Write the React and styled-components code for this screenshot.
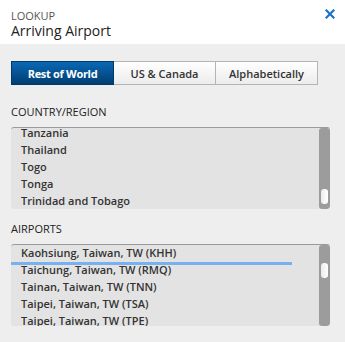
import React from "react";
import styled, { createGlobalStyle } from "styled-components";

const GlobalStyle = createGlobalStyle`
  html, body {
    margin: 0;
    padding: 0;
    background: #eeeeee;
  }
  body {
    font-family: "Open Sans", "Liberation Sans", sans-serif;
  }
`;

const Panel = styled.div`
  width: 345px;
  height: 342px;
  display: flex;
  flex-direction: column;
  background: #eeeeee;
  overflow: hidden;
`;

const Header = styled.div`
  height: 44px;
  background: #ffffff;
  display: flex;
  justify-content: space-between;
  align-items: flex-start;
  padding: 0 10px 0 11px;
  box-sizing: border-box;
`;

const Titles = styled.div`
  display: flex;
  flex-direction: column;
  padding-top: 9px;
`;

const Kicker = styled.div`
  font-size: 11px;
  line-height: 13px;
  color: #555555;
`;

const Title = styled.div`
  font-size: 14px;
  line-height: 17px;
  color: #222222;
`;

const Close = styled.div`
  margin-top: 9px;
  width: 10px;
  height: 10px;
  display: flex;
`;

const Body = styled.div`
  padding: 17px 15px 0 11px;
  display: flex;
  flex-direction: column;
`;

const Tabs = styled.div`
  display: flex;
  width: 307px;
  height: 24px;
`;

const Tab = styled.div`
  flex: 1;
  display: flex;
  align-items: center;
  justify-content: center;
  font-size: 11px;
  font-weight: ${(p) => (p.$active ? 700 : 600)};
  letter-spacing: ${(p) => (p.$active ? "-0.3px" : "0")};
  color: ${(p) => (p.$active ? "#ffffff" : "#333333")};
  background: ${(p) =>
    p.$active
      ? "linear-gradient(#0a68b4, #003e72)"
      : "linear-gradient(#ffffff, #ececec)"};
  border: 1px solid ${(p) => (p.$active ? "#003a6a" : "#b4b4b4")};
  border-left-width: ${(p) => (p.$first ? "1px" : "0")};
  box-sizing: border-box;
`;

const Label = styled.div`
  margin-top: ${(p) => p.$top}px;
  font-size: 11px;
  line-height: 14px;
  color: #222222;
`;

const ListBox = styled.div`
  margin-top: 8px;
  width: 319px;
  height: 82px;
  display: flex;
  background: #e3e3e3;
  border-top: 1px solid #9a9a9a;
  border-radius: 3px;
  box-sizing: border-box;
  overflow: hidden;
`;

const Items = styled.div`
  flex: 1;
  overflow: hidden;
  position: relative;
`;

const ItemStack = styled.div`
  margin-top: ${(p) => p.$offset}px;
`;

const Item = styled.div`
  height: 17px;
  line-height: 17px;
  padding-left: 10px;
  font-size: 11px;
  font-weight: 600;
  color: #333333;
  white-space: nowrap;
  position: relative;

  ${(p) =>
    p.$marked &&
    `
    &::after {
      content: "";
      position: absolute;
      left: 0;
      bottom: -4px;
      width: 281px;
      height: 3px;
      background: #78b2ee;
    }
  `}
`;

const Track = styled.div`
  width: 11px;
  background: #9c9c9c;
  border-radius: 3px;
  display: flex;
  justify-content: center;
`;

const Thumb = styled.div`
  margin-top: ${(p) => p.$top}px;
  width: 7px;
  height: 15px;
  border-radius: 3px;
  background: linear-gradient(90deg, #ececec, #ffffff);
`;

const countries = ["Tanzania", "Thailand", "Togo", "Tonga", "Trinidad and Tobago"];
const airports = [
  "Kaohsiung, Taiwan, TW (KHH)",
  "Taichung, Taiwan, TW (RMQ)",
  "Tainan, Taiwan, TW (TNN)",
  "Taipei, Taiwan, TW (TSA)",
  "Taipei, Taiwan, TW (TPE)",
];

const List = ({ items, offset, thumbTop, marked }) => (
  <ListBox>
    <Items>
      <ItemStack $offset={offset}>
        {items.map((name, i) => (
          <Item key={name + i} $marked={i === marked}>
            {name}
          </Item>
        ))}
      </ItemStack>
    </Items>
    <Track>
      <Thumb $top={thumbTop} />
    </Track>
  </ListBox>
);

export default function App() {
  return (
    <Panel>
      <GlobalStyle />
      <Header>
        <Titles>
          <Kicker>LOOKUP</Kicker>
          <Title>Arriving Airport</Title>
        </Titles>
        <Close>
          <svg width="10" height="10" viewBox="0 0 10 10">
            <path d="M1.5 1.5 L8.5 8.5 M8.5 1.5 L1.5 8.5" stroke="#1b74c9" strokeWidth="2.2" strokeLinecap="square" />
          </svg>
        </Close>
      </Header>
      <Body>
        <Tabs>
          <Tab $active $first>Rest of World</Tab>
          <Tab>US &amp; Canada</Tab>
          <Tab>Alphabetically</Tab>
        </Tabs>
        <Label $top={20}>COUNTRY/REGION</Label>
        <List items={countries} offset={-4} thumbTop={61} />
        <Label $top={13}>AIRPORTS</Label>
        <List items={airports} offset={-1} thumbTop={18} marked={0} />
      </Body>
    </Panel>
  );
}
